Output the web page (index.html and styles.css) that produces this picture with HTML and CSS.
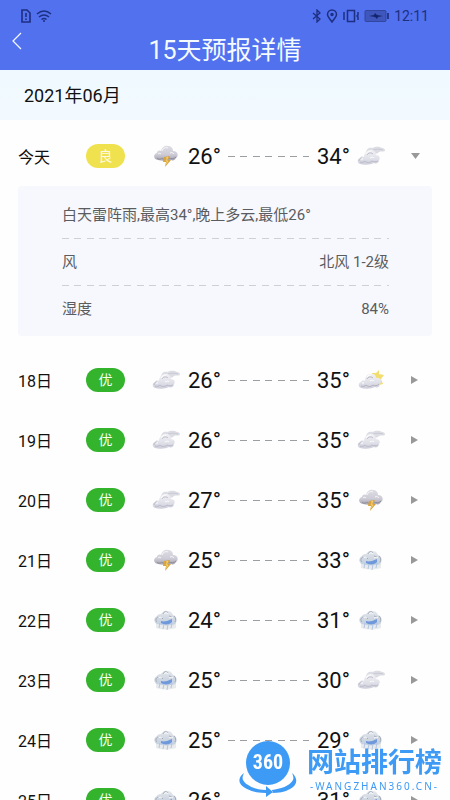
FILE: index.html
```html
<!DOCTYPE html>
<html lang="zh-CN">
<head>
<meta charset="utf-8">
<meta name="viewport" content="width=device-width, initial-scale=1">
<title>15天预报详情</title>
<link rel="stylesheet" href="styles.css">
</head>
<body>
<svg class="defs" aria-hidden="true">
  <defs>
    <linearGradient id="g-cloud" x1="0" y1="0" x2="0" y2="1"><stop offset="0" stop-color="#f1f1f4"/><stop offset=".6" stop-color="#e0e0e9"/><stop offset="1" stop-color="#cccdd9"/></linearGradient>
    <linearGradient id="g-storm" x1="0" y1="0" x2="0" y2="1"><stop offset="0" stop-color="#dedde4"/><stop offset=".6" stop-color="#cdccd6"/><stop offset="1" stop-color="#a09fac"/></linearGradient>
    <linearGradient id="g-rain" x1="0" y1="0" x2="0" y2="1"><stop offset="0" stop-color="#e8ebef"/><stop offset=".5" stop-color="#d0d7e1"/><stop offset="1" stop-color="#c3d0e3"/></linearGradient>
    <filter id="soft" x="-20%" y="-20%" width="140%" height="140%"><feGaussianBlur stdDeviation=".7"/></filter>
    <symbol id="cloudy" viewBox="0 0 28 24">
      <g filter="url(#soft)">
        <path d="M9 9c0-4 3-6 7-5 3-2 7-1 9 0 2 0 3 1 3 3-2 1-4 0-6 1-2 2-4 2-6 2z" fill="#dcdde4"/>
        <path d="M16 6c3-1 6-1 10 0" stroke="#c8c9d2" stroke-width="1" fill="none"/>
        <path d="M3 20c-3-1-3-5 0-6 1-2 3-2 4-1 0-4 3-7 7-7 3 0 5 2 5 5 3 0 5 3 3 5 0 3-3 4-5 3-4 2-10 2-14 1z" fill="url(#g-cloud)"/>
        <path d="M3 18c2 1 4 0 5-1 2 2 5 2 7 0 2 1 4 1 6 0M10 11c1-2 4-3 6-1M2 17c0-2 1-3 3-3" stroke="#b9bac8" stroke-width="1" fill="none"/>
        <path d="M9 10c1-2 3-3 5-3M4 15h2M13 14c2-1 3-1 4 0" stroke="#fff" stroke-width="1" fill="none"/>
      </g>
    </symbol>
    <symbol id="storm" viewBox="0 0 28 24">
      <g filter="url(#soft)">
        <path d="M6 16c-5-1-5-6-1-7 0-2 2-3 4-2 1-4 4-6 7-5 3 0 5 2 5 5 5 0 6 5 3 7-1 2-3 3-5 2-4 1-9 1-13 0z" fill="url(#g-storm)"/>
        <path d="M5 14c2 2 4 1 5 0 2 2 5 2 7 0 2 1 5 1 7-1" stroke="#8f8d9a" stroke-width="1" fill="none"/>
        <path d="M10 7c1-3 4-4 6-3M6 10c1-1 2-1 3 0M18 9c2-1 3 0 4 1" stroke="#fafafa" stroke-width="1" fill="none"/>
      </g>
      <path d="M12 13l6-1-2 4h3l-6 7 1-5h-3z" fill="#d9a440"/><path d="M14 14l2-1-2 4h2l-2 3" fill="none" stroke="#f2d070"/>
    </symbol>
    <symbol id="rain" viewBox="0 0 28 24">
      <g filter="url(#soft)">
        <path d="M4 14h20v6q-10 3-20 0z" fill="#e8eaeb"/>
        <path d="M5 16c-3-1-4-6 0-8 1-2 3-2 4-2 2-3 4-4 7-3 3 0 4 2 5 4 4 1 4 5 3 8-2 2-4 2-6 2-4 1-8 0-13-1z" fill="url(#g-rain)"/>
        <path d="M5 14c-2-2-1-4 1-5M11 6c1-3 4-3 5-1M22 8c2 2 2 4 1 6M9 9l2 2M17 8l3 1" stroke="#a3abb8" stroke-width="1" fill="none"/>
        <path d="M12 6c1-1 3-2 4 0M7 10c1-1 2-1 3 0M17 10c2-1 3-1 4 0" stroke="#fff" stroke-width="1" fill="none"/>
        <path d="M9 13c3 1 4 0 6 0l5-2v3c-2 3-8 3-11 1z" fill="#6f99dc"/>
        <path d="M8 15l-1 5M12 16l-1 5M16 16l-1 6M20 15l-1 5" stroke="#b3c6e2" stroke-width="1"/>
      </g>
    </symbol>
    <symbol id="sunny" viewBox="0 0 28 24">
      <g filter="url(#soft)">
        <path d="M15 5l4 0 3-3v4l5 1-3 4 2 5-4 1-6-5z" fill="#f2de70"/>
        <path d="M4 20c-3-1-3-5 0-6 1-2 3-2 4-1 0-5 3-8 7-7 3 0 4 2 4 4 4-1 7 3 4 6 0 3-3 4-5 3-4 2-10 2-14 1z" fill="url(#g-cloud)"/>
        <path d="M4 18c2 1 4 0 5-1 2 2 5 2 7 0 2 1 4 1 6-1M10 11c1-2 4-3 6-1" stroke="#b1b2bb" stroke-width="1" fill="none"/>
        <path d="M10 9c1-2 3-2 4-2M5 15h2M13 13c2-1 3-1 4 0" stroke="#fff" stroke-width="1" fill="none"/>
      </g>
    </symbol>
  </defs>
</svg>

<div class="app">
  <header class="top">
    <div class="status">
      <svg width="12" height="14" viewBox="0 0 12 14" fill="none" stroke="currentColor" stroke-width="1.6"><path d="M2 1h5l3 3v9H2zM6 4v4M6 9.500v1.500"/></svg>
      <svg width="16" height="14" viewBox="0 0 16 14" fill="none" stroke="currentColor" stroke-width="1.600"><path d="M1 5Q8-1 15 5M3 8q5-4 10 0M5.500 10.500q2.500-2 5 0"/><circle cx="8" cy="12" r="1" fill="currentColor" stroke="none"/></svg>
      <span class="spacer"></span>
      <svg width="10" height="14" viewBox="0 0 10 14" fill="none" stroke="currentColor" stroke-width="1.300"><path d="M1 4l7 6-3 3V1l3 3-7 6"/></svg>
      <svg width="12" height="14" viewBox="0 0 12 14" fill="none" stroke="currentColor" stroke-width="1.500"><path d="M6 13C3 9 1.500 7.500 1.500 5.500a4.500 4.500 0 0 1 9 0C10.500 7.500 9 9 6 13z"/><circle cx="6" cy="5.500" r="1" fill="currentColor"/></svg>
      <svg width="18" height="14" viewBox="0 0 18 14" fill="none" stroke="currentColor" stroke-width="1.500"><path d="M5.500 1.500h7v11h-7zM2 3v8M16 3v3l-1 1 1 1v3"/></svg>
      <svg width="26" height="14" viewBox="0 0 26 14"><rect x="1" y="1.500" width="21" height="11" rx="1" fill="#3f57bd" stroke="#31469f"/><path d="M5 7l5-1 1-2 2 2 6 1-5 1-1 2-2-2z" fill="#15256d"/><path d="M24 4v6" stroke="#26398f" stroke-width="2"/></svg>
      <time>12:11</time>
    </div>
    <div class="titlebar">
      <a class="back" href="#" aria-label="返回"><svg width="10" height="18" viewBox="0 0 10 18" fill="none" stroke="currentColor" stroke-width="1.200"><path d="M9 1L1 9l8 8"/></svg></a>
      <h1>15天预报详情</h1>
    </div>
  </header>
  <h2 class="month">2021年06月</h2>
  <main class="list">
    <button class="row" aria-expanded="true"><span class="day">今天</span><span class="pill good">良</span><svg class="wx start"><use href="#storm"/></svg><b>26°</b><i class="dash"></i><b>34°</b><svg class="wx"><use href="#cloudy"/></svg><i class="arrow down"></i></button>
    <dl class="detail">
      <div class="item"><dt>白天雷阵雨,最高34°,晚上多云,最低26°</dt></div>
      <div class="item"><dt>风</dt><dd>北风 1-2级</dd></div>
      <div class="item"><dt>湿度</dt><dd>84%</dd></div>
    </dl>
    <button class="row"><span class="day">18日</span><span class="pill">优</span><svg class="wx start"><use href="#cloudy"/></svg><b>26°</b><i class="dash"></i><b>35°</b><svg class="wx"><use href="#sunny"/></svg><i class="arrow"></i></button>
    <button class="row"><span class="day">19日</span><span class="pill">优</span><svg class="wx start"><use href="#cloudy"/></svg><b>26°</b><i class="dash"></i><b>35°</b><svg class="wx"><use href="#cloudy"/></svg><i class="arrow"></i></button>
    <button class="row"><span class="day">20日</span><span class="pill">优</span><svg class="wx start"><use href="#cloudy"/></svg><b>27°</b><i class="dash"></i><b>35°</b><svg class="wx"><use href="#storm"/></svg><i class="arrow"></i></button>
    <button class="row"><span class="day">21日</span><span class="pill">优</span><svg class="wx start"><use href="#storm"/></svg><b>25°</b><i class="dash"></i><b>33°</b><svg class="wx"><use href="#rain"/></svg><i class="arrow"></i></button>
    <button class="row"><span class="day">22日</span><span class="pill">优</span><svg class="wx start"><use href="#rain"/></svg><b>24°</b><i class="dash"></i><b>31°</b><svg class="wx"><use href="#rain"/></svg><i class="arrow"></i></button>
    <button class="row"><span class="day">23日</span><span class="pill">优</span><svg class="wx start"><use href="#rain"/></svg><b>25°</b><i class="dash"></i><b>30°</b><svg class="wx"><use href="#cloudy"/></svg><i class="arrow"></i></button>
    <button class="row"><span class="day">24日</span><span class="pill">优</span><svg class="wx start"><use href="#rain"/></svg><b>25°</b><i class="dash"></i><b>29°</b><svg class="wx"><use href="#rain"/></svg><i class="arrow"></i></button>
    <button class="row"><span class="day">25日</span><span class="pill">优</span><svg class="wx start"><use href="#rain"/></svg><b>26°</b><i class="dash"></i><b>31°</b><svg class="wx"><use href="#rain"/></svg><i class="arrow"></i></button>
  </main>
</div>

<aside class="mark">
  <div class="globe">
    <svg width="60" height="60" viewBox="0 0 60 60" fill="#3d9af5"><circle cx="30" cy="23" r="22"/><path d="M6 33c-7 5-6 12 3 16 6 3 13 4 19 4v4l7-5-7-6v4C18 50 7 45 5 40c-1-2 0-5 1-7zM54 33c6 5 6 12-2 16-5 3-12 4-18 4v-3c8-1 18-4 21-10 1-2 0-5-1-7z"/></svg>
    <strong>360</strong>
  </div>
  <div class="name"><strong>网站排行榜</strong><small>-WANGZHAN360.CN-</small></div>
</aside>
</body>
</html>
```
FILE: styles.css
```css
* { box-sizing: border-box; }

body {
  margin: 0;
  background: #fefefe;
  color: #111;
  font-family: Roboto, "Noto Sans CJK SC", sans-serif;
}

.defs { position: absolute; width: 0; height: 0; }

.app { height: 100vh; overflow: hidden; }

.top { height: 70px; background: #5271ef; }

.status {
  display: flex;
  align-items: center;
  gap: 4px;
  height: 32px;
  padding: 0 21px 0 20px;
  color: #1d2f80;
  font-size: 14px;
}

.spacer { flex: 1; }

.titlebar {
  display: grid;
  grid-template-columns: 30px 1fr 30px;
  height: 38px;
  color: #f4fbff;
}

.back { padding: 0 0 0 12px; color: inherit; line-height: 0; }

h1 {
  margin: 0;
  font-size: 25px;
  font-weight: 400;
  line-height: 38px;
  text-align: center;
}

.month {
  margin: 0;
  padding: 2px 24px 0;
  background: linear-gradient(#eff9ff, #f3faff);
  font-size: 18px;
  font-weight: 400;
  line-height: 48px;
}

.list { padding-top: 6px; }

.row {
  display: grid;
  grid-template-columns: 60px 39px 11px 28px 32px 1fr 32px 28px 10px 8px;
  column-gap: 8px;
  align-items: center;
  width: 100%;
  height: 60px;
  padding: 0 31px 0 18px;
  border: 0;
  background: none;
  color: inherit;
  font: inherit;
  font-size: 16px;
  text-align: left;
}

.row b { font-size: 22px; font-weight: 400; white-space: nowrap; }
.start { grid-column: 4; }

.pill {
  height: 24px;
  border-radius: 12px;
  background: #34b42d;
  color: #f4fff2;
  font-size: 14px;
  line-height: 24px;
  text-align: center;
}

.good { background: #f0e14e; color: #fffbe0; }

.wx { width: 28px; height: 24px; }

.dash,
.item + .item {
  background: linear-gradient(90deg, var(--ink) 7px, transparent 7px 12px, var(--ink) 12px 19px, transparent 19px) 0 0 / 25px 1px repeat-x;
}

.dash { --ink: #9b9fa2; height: 1px; }

.arrow {
  grid-column: 10;
  width: 7px;
  height: 8px;
  background: #999;
  clip-path: polygon(0 0, 100% 50%, 0 100%);
}

.arrow.down {
  width: 9px;
  height: 6px;
  clip-path: polygon(0 0, 100% 0, 50% 100%);
}

.detail {
  margin: 0 18px 14px;
  padding: 4px 43px 4px 44px;
  border-radius: 4px;
  background: #f6f8fd;
  color: #5b5c60;
  font-size: 15px;
}

.item {
  --ink: #cdd0d6;
  display: flex;
  justify-content: space-between;
  padding-top: 2px;
  line-height: 46px;
}

.item + .item { padding-top: 1px; }

.item dd { margin: 0; }

.mark {
  position: fixed;
  right: 8px;
  bottom: 0;
  display: flex;
  gap: 9px;
  color: #3d9af5;
}

.globe { position: relative; width: 60px; height: 60px; }

.globe strong {
  position: absolute;
  inset: 0 0 auto;
  color: #fff;
  font-family: "Liberation Sans Narrow", "Roboto Condensed", Roboto, sans-serif;
  font-size: 20px;
  line-height: 44px;
  text-align: center;
}

.name { display: flex; flex-direction: column; padding-top: 7px; text-align: center; }
.name strong { font-size: 27px; line-height: 32px; }
.name small { font-family: "Noto Sans", sans-serif; font-size: 10px; line-height: 14px; letter-spacing: 2px; white-space: nowrap; }
```
